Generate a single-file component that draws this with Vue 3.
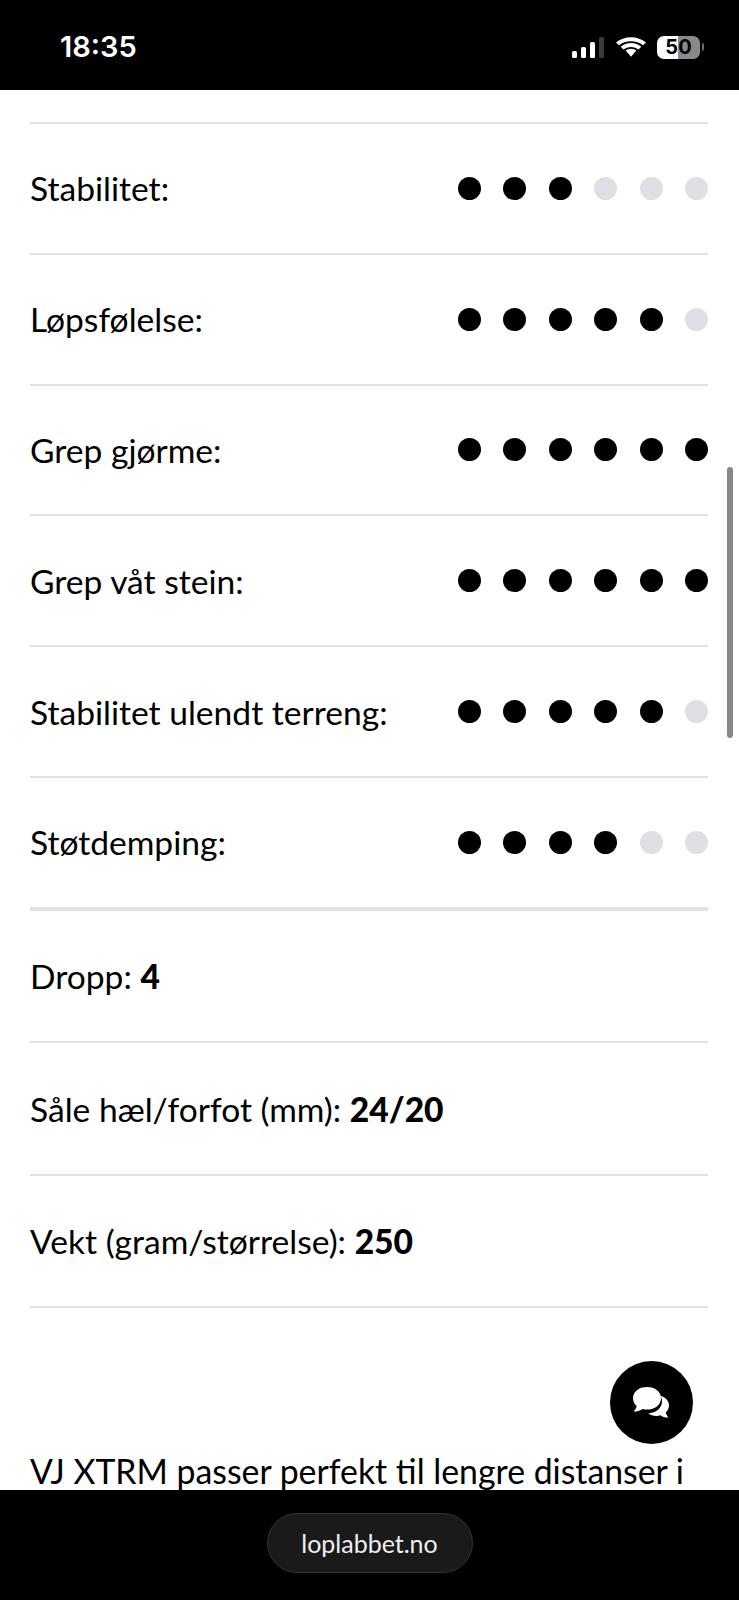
<script setup>
const ratings = [
  { label: 'Stabilitet:', score: 3 },
  { label: 'Løpsfølelse:', score: 5 },
  { label: 'Grep gjørme:', score: 6 },
  { label: 'Grep våt stein:', score: 6 },
  { label: 'Stabilitet ulendt terreng:', score: 5 },
  { label: 'Støtdemping:', score: 4 },
]

const specs = [
  { label: 'Dropp:', value: '4' },
  { label: 'Såle hæl/forfot (mm):', value: '24/20' },
  { label: 'Vekt (gram/størrelse):', value: '250' },
]
</script>

<template>
  <div class="phone">
    <header class="status-bar">
      <span class="time">18:35</span>
      <div class="status-icons">
        <div class="signal">
          <i class="bar b1"></i>
          <i class="bar b2"></i>
          <i class="bar b3"></i>
          <i class="bar b4"></i>
        </div>
        <svg class="wifi" viewBox="2 0 26 20" width="30" height="20" preserveAspectRatio="none">
          <path d="M15 4.200c4 0 7.600 1.500 10.400 4.100l2.600-2.800C24.500 2.200 20 .2 15 .2S5.500 2.200 2 5.500l2.600 2.800C7.400 5.700 11 4.200 15 4.200z" fill="#fff"/>
          <path d="M15 10c2.500 0 4.700.9 6.400 2.500l2.600-2.800C21.600 7.400 18.500 6 15 6s-6.600 1.400-9 3.700l2.600 2.800C10.300 10.900 12.500 10 15 10z" fill="#fff"/>
          <path d="M15 11.800c-1.800 0-3.400.7-4.600 1.800L15 19.800l4.600-6.200c-1.200-1.100-2.800-1.600-4.600-1.800z" fill="#fff"/>
        </svg>
        <div class="battery">50</div>
      </div>
    </header>

    <main class="content">
      <div v-for="row in ratings" :key="row.label" class="row rating">
        <span>{{ row.label }}</span>
        <div class="dots">
          <i v-for="n in 6" :key="n" class="dot" :class="{ on: n <= row.score }"></i>
        </div>
      </div>
      <div class="specs">
        <div v-for="spec in specs" :key="spec.label" class="row spec">
          <span>{{ spec.label }} <b>{{ spec.value }}</b></span>
        </div>
      </div>
      <p class="intro">VJ XTRM passer perfekt til lengre distanser i</p>

      <div class="scrollbar"></div>
      <button class="chat" type="button" aria-label="Chat">
        <svg viewBox="0 0 40 34" width="40" height="34">
          <path d="M25 9.500c6.500 0 12 4 12 10 0 2.800-1.200 5.200-3.200 7 .3 1.700 1.400 3.600 2.700 5.100-3 .2-6.300-.9-8.200-2.300-1.300.4-2.700.6-4.100.6-3 0-5.800-.9-8-2.400C24 27 30 22 30 15.500c0-2.100-.6-4.100-1.700-5.800-1-.1-2.100-.2-3.300-.2z" fill="#fff"/>
          <path d="M15 1C7 1 1 5.800 1 12.200c0 3.100 1.400 5.800 3.700 7.800-.4 2-1.700 4-3.200 5.600 3.500.2 7-1 9.200-2.600 1.400.4 2.900.6 4.300.6 8 0 14-4.900 14-11.400S23 1 15 1z" fill="#fff"/>
        </svg>
      </button>
    </main>

    <footer class="bottom-bar">
      <div class="address">loplabbet.no</div>
    </footer>
  </div>
</template>

<style scoped>
.phone {
  display: flex;
  flex-direction: column;
  width: 739px;
  height: 1600px;
  overflow: hidden;
  background: #fff;
  color: #000;
  font-family: Lato, "Noto Sans", sans-serif;
}

.status-bar {
  display: flex;
  align-items: center;
  justify-content: space-between;
  flex: none;
  height: 90px;
  padding: 0 39px 0 60px;
  box-sizing: border-box;
  background: #000;
  color: #fff;
}
.time {
  font-family: Inter, sans-serif;
  font-size: 29px;
  font-weight: 600;
  padding-top: 2px;
}
.status-icons {
  display: flex;
  align-items: center;
  padding-top: 4px;
}
.signal {
  display: flex;
  align-items: flex-end;
  gap: 4px;
  height: 21px;
}
.bar {
  width: 5px;
  border-radius: 1.500px;
  background: #fff;
}
.b1 { height: 7px; }
.b2 { height: 11px; }
.b3 { height: 16px; }
.b4 { height: 21px; background: #3a3a3a; }
.wifi { margin-left: 12px; }
.battery {
  position: relative;
  width: 43px;
  height: 23px;
  margin-left: 11px;
  border-radius: 7px;
  background: linear-gradient(90deg, #fff 50%, #8a8a8a 50%);
  color: #000;
  font-family: Inter, sans-serif;
  font-size: 20px;
  font-weight: 700;
  line-height: 23px;
  text-align: center;
}
.battery::after {
  content: "";
  position: absolute;
  top: 7px;
  right: -4px;
  width: 2px;
  height: 8px;
  border-radius: 0 2px 2px 0;
  background: #6a6a6a;
}

.content {
  position: relative;
  flex: 1;
  min-height: 0;
  padding: 32px 31px 0 30px;
  overflow: hidden;
}
.row {
  display: flex;
  align-items: center;
  justify-content: space-between;
  box-sizing: border-box;
  border-top: 2px solid #e0e0e6;
  font-size: 33.600px;
}
.rating {
  height: 130.800px;
}
.dots {
  display: flex;
  gap: 22.500px;
}
.dot {
  width: 23px;
  height: 23px;
  border-radius: 50%;
  background: #dfdfe6;
}
.dot.on { background: #000; }

.specs {
  border-top: 4px solid #e0e0e6;
}
.spec {
  height: 133px;
}
.spec:first-child {
  height: 130.500px;
  border-top: none;
}
.spec:last-child {
  height: 134px;
  border-bottom: 2px solid #e0e0e6;
}
.spec b { font-weight: 900; }

.intro {
  margin: 0;
  padding-top: 143px;
  font-size: 33.800px;
  white-space: nowrap;
}

.scrollbar {
  position: absolute;
  top: 377px;
  right: 6px;
  width: 6px;
  height: 271px;
  border-radius: 3px;
  background: #888;
}
.chat {
  position: absolute;
  top: 1271px;
  left: 610px;
  display: flex;
  align-items: center;
  justify-content: center;
  width: 83px;
  height: 83px;
  padding: 0;
  border: none;
  border-radius: 50%;
  background: #000;
}

.bottom-bar {
  display: flex;
  justify-content: center;
  flex: none;
  height: 110px;
  padding-top: 23px;
  box-sizing: border-box;
  background: #000;
}
.address {
  display: flex;
  align-items: center;
  justify-content: center;
  width: 206px;
  height: 60px;
  box-sizing: border-box;
  border: 1.500px solid #333;
  border-radius: 30px;
  background: #1a1a1a;
  color: #f0f0f0;
  font-size: 25px;
}
</style>
